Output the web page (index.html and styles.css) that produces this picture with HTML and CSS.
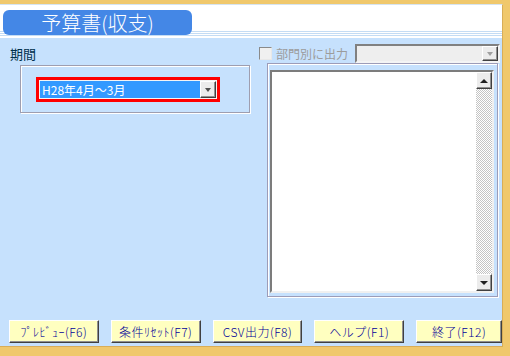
FILE: index.html
```html
<!DOCTYPE html>
<html lang="ja">
<head>
    <meta charset="UTF-8">
    <title>予算書(収支)</title>
    <link rel="stylesheet" href="styles.css">
</head>
<body>
    <div class="window">
        <div class="titlebar">
            <div class="title">予算書(収支)</div>
        </div>

        <div class="content">
            <div class="main">
                <div class="left">
                    <div class="label">期間</div>
                    <div class="group">
                        <div class="period-combo">
                            <div class="combo-field">H28年4月～3月</div>
                            <div class="drop-btn"></div>
                        </div>
                    </div>
                </div>

                <div class="right">
                    <div class="opt">
                        <span class="check"></span>
                        <span class="opt-label">部門別に出力</span>
                        <div class="dept-combo">
                            <div class="drop-btn disabled"></div>
                        </div>
                    </div>
                    <div class="list-frame">
                        <div class="listbox">
                            <div class="list-body"></div>
                            <div class="scrollbar">
                                <div class="sb-btn up"></div>
                                <div class="sb-track"></div>
                                <div class="sb-btn down"></div>
                            </div>
                        </div>
                    </div>
                </div>
            </div>

            <div class="buttons">
                <button class="fbtn">ﾌﾟﾚﾋﾞｭｰ(F6)</button>
                <button class="fbtn">条件ﾘｾｯﾄ(F7)</button>
                <button class="fbtn">CSV出力(F8)</button>
                <button class="fbtn">ヘルプ(F1)</button>
                <button class="fbtn last">終了(F12)</button>
            </div>
        </div>
    </div>
</body>
</html>
```

FILE: styles.css
```css
body {
    margin: 0;
    padding: 0;
    width: 510px;
    height: 356px;
    overflow: hidden;
    background: #f0c86c;
    font-family: "Noto Sans CJK JP", "Noto Sans", sans-serif;
}
.window {
    width: 502px;
    margin-top: 4px;
    border-top: 1px solid #d6e4f0;
    border-right: 1px solid #d8ad58;
    border-bottom: 1px solid #d8ad58;
}
.titlebar {
    height: 33px;
    box-sizing: border-box;
    padding: 5px 0 0 3px;
    background:
        linear-gradient(#fff 0 26px, #c4dcf4 26px 27px, #fff 27px 28px,
            #c4dcf4 28px 29px, #fff 29px 30px, #c4dcf4 30px 31px, #fff 31px);
}
.title {
    width: 189px;
    height: 25px;
    line-height: 25px;
    background: #4487e6;
    border-radius: 6px;
    color: #fff;
    font-size: 20px;
    font-weight: 300;
    text-align: center;
}
.content {
    height: 308px;
    background: #c6e1fd;
}
.main {
    display: flex;
    height: 259px;
}

/* left: period */
.left {
    width: 259px;
}
.label {
    padding: 8px 0 0 10px;
    height: 15px;
    font-size: 13px;
    line-height: 15px;
    color: #00304c;
}
.group {
    margin: 4px 0 0 20px;
    width: 230px;
    height: 48px;
    box-sizing: border-box;
    border: 1px solid #9e9eb0;
    box-shadow: inset 1px 1px 0 #fff, 1px 1px 0 #fff;
    padding: 11px 0 0 15px;
}
.period-combo {
    display: flex;
    width: 184px;
    height: 25px;
    box-sizing: border-box;
    border: 3px solid #ff0000;
    padding: 1px;
    background: #f4f4f4;
}
.combo-field {
    flex: 1;
    background: #3399ff;
    color: #fff;
    font-size: 12px;
    line-height: 17px;
    padding-left: 2px;
}
.drop-btn {
    position: relative;
    width: 16px;
    box-sizing: border-box;
    background: #ececec;
    border: 1px solid;
    border-color: #fff #404040 #404040 #fff;
    box-shadow: inset -1px -1px 0 #909090;
}
.drop-btn::after {
    content: "";
    position: absolute;
    left: 4px;
    top: 6px;
    border-left: 3px solid transparent;
    border-right: 3px solid transparent;
    border-top: 4px solid #505050;
}
.drop-btn.disabled::after {
    border-top-color: #a0a0a0;
}

/* right: department + list */
.right {
    flex: 1;
}
.opt {
    display: flex;
    align-items: center;
    height: 19px;
    margin-top: 6px;
}
.check {
    flex-shrink: 0;
    width: 13px;
    height: 13px;
    box-sizing: border-box;
    border: 1px solid;
    border-color: #8a8a8a #e8e8e8 #e8e8e8 #8a8a8a;
    background: #f0f0f0;
    margin-right: 4px;
}
.opt-label {
    flex-shrink: 0;
    width: 79px;
    white-space: nowrap;
    font-size: 12px;
    color: #9c9c9c;
}
.dept-combo {
    flex-shrink: 0;
    display: flex;
    justify-content: flex-end;
    width: 145px;
    height: 19px;
    box-sizing: border-box;
    border: 2px solid;
    border-color: #808080 #f4f4f4 #f4f4f4 #808080;
    background: #eeeeee;
}
.dept-combo .drop-btn {
    width: 16px;
}
.dept-combo .drop-btn::after {
    top: 5px;
}
.list-frame {
    margin-left: 8px;
    width: 231px;
    height: 234px;
    box-sizing: border-box;
    border: 1px solid #9c9cb8;
    box-shadow: inset 1px 1px 0 #fff, 1px 1px 0 #fff;
    padding: 6px 3px 3px 2px;
}
.listbox {
    display: flex;
    height: 100%;
    box-sizing: border-box;
    border: 2px solid;
    border-color: #7c7c7c #f0f0f0 #f0f0f0 #7c7c7c;
    background: #fff;
}
.list-body {
    flex: 1;
}
.scrollbar {
    width: 16px;
    display: flex;
    flex-direction: column;
}
.sb-track {
    flex: 1;
    background: repeating-conic-gradient(#c4c4c4 0 25%, #fff 0 50%) 0 0 / 2px 2px;
}
.sb-btn {
    position: relative;
    height: 17px;
    box-sizing: border-box;
    background: #ececec;
    border: 1px solid;
    border-color: #fff #404040 #404040 #fff;
    box-shadow: inset -1px -1px 0 #909090;
}
.sb-btn::after {
    content: "";
    position: absolute;
    left: 3px;
    top: 6px;
    border-left: 4px solid transparent;
    border-right: 4px solid transparent;
}
.sb-btn.up::after {
    border-bottom: 4px solid #202020;
}
.sb-btn.down::after {
    border-top: 4px solid #202020;
}

/* function buttons */
.buttons {
    display: flex;
    gap: 12px;
    padding: 23px 0 0 9px;
}
.fbtn {
    width: 90px;
    height: 23px;
    padding: 0;
    box-sizing: border-box;
    background: #ffffc0;
    border: 1px solid;
    border-color: #fff #404040 #404040 #fff;
    box-shadow: inset -1px -1px 0 #909090;
    color: #000098;
    font-family: "Noto Sans CJK JP", sans-serif;
    font-size: 12px;
    font-weight: 300;
    letter-spacing: 0.5px;
}
.fbtn.last {
    width: 86px;
}
```
